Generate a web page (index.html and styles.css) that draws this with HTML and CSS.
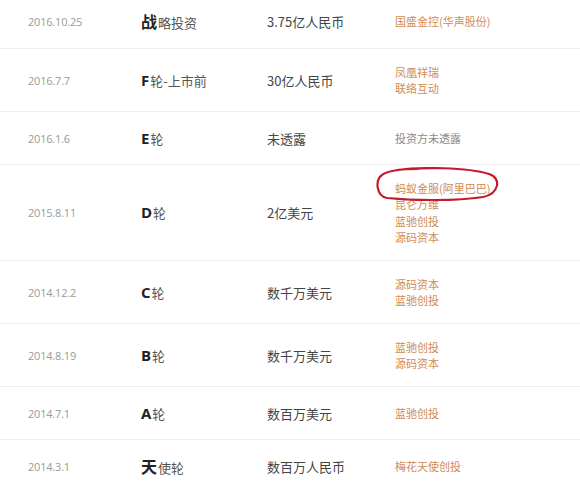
FILE: index.html
```html
<!DOCTYPE html>
<html lang="zh-CN">
<head>
    <meta charset="UTF-8">
    <meta name="viewport" content="width=device-width, initial-scale=1.0">
    <title>融资历程</title>
    <link rel="stylesheet" href="styles.css">
</head>
<body>
    <div class="rounds">
        <div class="round-row">
            <div class="date">2016.10.25</div>
            <div class="stage"><b>战</b>略投资</div>
            <div class="amount">3.75亿人民币</div>
            <div class="investors"><span>国盛金控(华声股份)</span></div>
        </div>
        <div class="round-row">
            <div class="date">2016.7.7</div>
            <div class="stage"><b class="latin">F</b>轮-上市前</div>
            <div class="amount">30亿人民币</div>
            <div class="investors"><span>凤凰祥瑞</span><span>联络互动</span></div>
        </div>
        <div class="round-row">
            <div class="date">2016.1.6</div>
            <div class="stage"><b class="latin">E</b>轮</div>
            <div class="amount">未透露</div>
            <div class="investors"><span class="muted">投资方未透露</span></div>
        </div>
        <div class="round-row">
            <div class="date">2015.8.11</div>
            <div class="stage"><b class="latin">D</b>轮</div>
            <div class="amount">2亿美元</div>
            <div class="investors">
                <span class="marked">蚂蚁金服(阿里巴巴)
                    <svg class="circle-mark" viewBox="0 0 125 34" width="125" height="34">
                        <path d="M22 3 C45 0 92 0 114 7 C127 11 124 27 108 30 C82 34 42 34 12 31 C1 29 0 13 7 8 C13 3 28 2 44 2" fill="none" stroke="#c41a2b" stroke-width="2.2" stroke-linecap="round"/>
                    </svg>
                </span>
                <span>昆仑万维</span><span>蓝驰创投</span><span>源码资本</span>
            </div>
        </div>
        <div class="round-row">
            <div class="date">2014.12.2</div>
            <div class="stage"><b class="latin">C</b>轮</div>
            <div class="amount">数千万美元</div>
            <div class="investors"><span>源码资本</span><span>蓝驰创投</span></div>
        </div>
        <div class="round-row">
            <div class="date">2014.8.19</div>
            <div class="stage"><b class="latin">B</b>轮</div>
            <div class="amount">数千万美元</div>
            <div class="investors"><span>蓝驰创投</span><span>源码资本</span></div>
        </div>
        <div class="round-row">
            <div class="date">2014.7.1</div>
            <div class="stage"><b class="latin">A</b>轮</div>
            <div class="amount">数百万美元</div>
            <div class="investors"><span>蓝驰创投</span></div>
        </div>
        <div class="round-row">
            <div class="date">2014.3.1</div>
            <div class="stage"><b>天</b>使轮</div>
            <div class="amount">数百万人民币</div>
            <div class="investors"><span>梅花天使创投</span></div>
        </div>
    </div>
</body>
</html>
```

FILE: styles.css
```css
:root {
    --line: #efefef;
    --date: #9a9a9a;
    --stage: #555555;
    --stage-strong: #222222;
    --amount: #444444;
    --investor: #d08c52;
    --muted: #8a8a8a;
}

html {
    overflow: hidden;
}

body {
    margin: 0;
    background: #ffffff;
    font-family: "Open Sans", "Noto Sans CJK SC", sans-serif;
}

.rounds {
    margin-top: -5px;
}

.round-row {
    display: grid;
    grid-template-columns: 113px 126px 128px 1fr;
    align-items: center;
    padding: 14.5px 0 14.5px 28px;
    border-bottom: 1px solid var(--line);
}

.date {
    font-size: 11px;
    color: var(--date);
    letter-spacing: -0.2px;
}

.stage {
    font-family: "Noto Sans CJK SC", sans-serif;
    font-size: 13px;
    line-height: 23px;
    color: var(--stage);
}

.stage b {
    font-size: 16px;
    color: var(--stage-strong);
    margin-right: 1px;
}

.stage b.latin {
    font-family: "Open Sans", sans-serif;
    font-size: 15px;
}

.amount {
    font-family: "Noto Sans CJK SC", sans-serif;
    font-size: 13px;
    color: var(--amount);
}

.investors {
    display: flex;
    flex-direction: column;
    font-family: "Noto Sans CJK SC", sans-serif;
    font-size: 11px;
    line-height: 16.5px;
    color: var(--investor);
}

.investors .muted {
    color: var(--muted);
}

.marked {
    position: relative;
}

.circle-mark {
    position: absolute;
    left: -20px;
    top: -13px;
}
```
